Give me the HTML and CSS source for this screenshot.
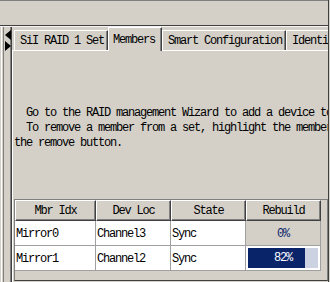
FILE: index.html
```html
<!DOCTYPE html>
<html>
<head>
<meta charset="utf-8">
<title>Members</title>
<link rel="stylesheet" href="styles.css">
</head>
<body>
<div class="win">
  <div class="toolbar"></div>
  <div class="main">
    <div class="side">
      <svg class="arrow" width="6" height="10" viewBox="0 0 6 10"><polygon points="6,0 6,10 0,5" fill="#000"/></svg>
      <svg class="arrow" width="6" height="10" viewBox="0 0 6 10"><polygon points="0,0 0,10 6,5" fill="#000"/></svg>
    </div>
    <div class="tabctl">
      <div class="tabs">
        <div class="tab">SiI RAID 1 Set</div>
        <div class="tab sel">Members</div>
        <div class="tab">Smart Configuration</div>
        <div class="tab">Identification</div>
      </div>
      <div class="panel">
        <div class="msg">  Go to the RAID management Wizard to add a device to the set.
  To remove a member from a set, highlight the member and press
the remove button.</div>
        <div class="frame">
          <div class="grid">
            <div class="hd">Mbr Idx</div>
            <div class="hd">Dev Loc</div>
            <div class="hd">State</div>
            <div class="hd">Rebuild</div>

            <div class="cell">Mirror0</div>
            <div class="cell">Channel3</div>
            <div class="cell">Sync</div>
            <div class="cell idle">0%</div>

            <div class="cell">Mirror1</div>
            <div class="cell">Channel2</div>
            <div class="cell">Sync</div>
            <div class="cell pcell">
              <div class="bar">
                <div class="fill" style="width:57px"></div>
                <div class="lbl">82%</div>
              </div>
            </div>
          </div>
        </div>
      </div>
    </div>
  </div>
</div>
</body>
</html>
```

FILE: styles.css
```css
* { box-sizing: border-box; }

html, body {
  margin: 0;
  padding: 0;
}

body {
  width: 330px;
  height: 282px;
  overflow: hidden;
  background: #d4d0c8;
  font-family: "Liberation Mono", "DejaVu Sans Mono", monospace;
  font-size: 12px;
  letter-spacing: -1.2px;
  color: #000;
}

.win {
  width: 329px;
  height: 282px;
  border-right: 1px solid #404040;
  display: flex;
  flex-direction: column;
  overflow: hidden;
}

.toolbar {
  flex: none;
  height: 26px;
  border-top: 1px solid #808080;
  border-bottom: 1px solid #404040;
}

.main {
  flex: 1;
  display: flex;
  border-top: 1px solid #f4f4f4;
  min-height: 0;
}

.side {
  flex: none;
  width: 12px;
  display: flex;
  flex-direction: column;
  gap: 1px;
  padding: 3px 0 0 5px;
  background: linear-gradient(to right,
    #d4d0c8 0 1px, #ffffff 1px 2px, #d4d0c8 2px 3px, #808080 3px 4px,
    #d4d0c8 4px 10px, #808080 10px 11px, #404040 11px 12px);
}

.arrow { display: block; }

.tabctl {
  flex: 1;
  min-width: 0;
  display: flex;
  flex-direction: column;
}

.tabs {
  flex: none;
  height: 23px;
  display: flex;
  align-items: flex-end;
  padding-left: 2px;
}

.tab {
  flex: none;
  white-space: pre;
  height: 20px;
  line-height: 15px;
  padding: 3px 3px 1px 5px;
  border-top: 1px solid #fff;
  border-left: 1px solid #fff;
  border-right: 1px solid #404040;
  box-shadow: inset -1px 0 #808080;
}

.tab.sel {
  position: relative;
  z-index: 1;
  height: 24px;
  margin-bottom: -1px;
  padding: 5px 6px 3px 4px;
  background: #d4d0c8;
}

.panel {
  flex: 1;
  border-top: 1px solid #fff;
  border-left: 1px solid #fff;
  padding-left: 1px;
}

.msg {
  margin-top: 55px;
  height: 45px;
  line-height: 15px;
  white-space: pre;
}

.frame {
  margin-top: 48px;
  width: 314px;
  height: 82px;
  border: 1px solid #808080;
  border-bottom-color: #404040;
}

.grid {
  display: grid;
  grid-template-columns: 81px 75px 75px 75px;
}

.hd {
  height: 21px;
  line-height: 15px;
  padding: 3px 0 1px;
  text-align: center;
  white-space: pre;
  border-top: 1px solid #fff;
  border-left: 1px solid #fff;
  border-right: 1px solid #404040;
  border-bottom: 1px solid #404040;
  box-shadow: inset -1px -1px #808080;
}

.cell {
  height: 25px;
  line-height: 21px;
  padding: 3px 0 0 1px;
  white-space: pre;
  overflow: hidden;
  background: #fff;
  border-right: 1px solid #a0a0a0;
  border-bottom: 1px solid #a0a0a0;
}

.cell.idle {
  background: #d4d0c8;
  color: #0a246a;
  text-align: center;
  padding-left: 0;
}

.cell.pcell {
  white-space: normal;
  padding: 2px 0 0 2px;
}

.bar {
  display: grid;
  grid-template-columns: 70px;
  width: 70px;
  height: 20px;
  background: #ccd2e2;
}

.fill {
  grid-area: 1 / 1;
  height: 20px;
  background: #0a246a;
}

.lbl {
  grid-area: 1 / 1;
  color: #fff;
  text-align: center;
  line-height: 20px;
}
```
